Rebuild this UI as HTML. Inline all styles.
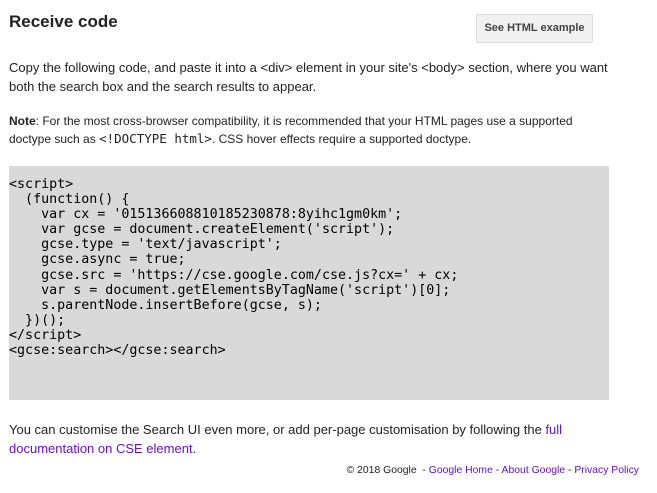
<!DOCTYPE html>
<html><head><style>
body{margin:0;background:#fff;font-family:"Liberation Sans",Arial,sans-serif;color:#222;width:657px;height:493px;position:relative;overflow:hidden}
h2{position:absolute;left:9px;top:12px;margin:0;font-size:17px;font-weight:bold;color:#222}
.btn{position:absolute;left:476px;top:14px;background:#f1f1f1;border:1px solid #dcdcdc;border-radius:2px;font-size:11px;font-weight:bold;color:#444;text-align:center;line-height:27px;box-sizing:border-box;width:117px;height:29px}
.p1{position:absolute;left:9px;top:58px;font-size:13px;line-height:19px;width:620px;margin:0}
.p2{position:absolute;left:9px;top:112px;font-size:12px;line-height:18px;width:600px;margin:0}
.p2 code{font-family:"DejaVu Sans Mono",monospace;font-size:12.5px}
pre{position:absolute;left:9px;top:166px;width:600px;height:234px;background:#d9d9d9;margin:0;padding:11px 0 0 0;box-sizing:border-box;font-family:"DejaVu Sans Mono",monospace;font-size:13.33px;line-height:15.1px;color:#000}
.p3{position:absolute;left:9px;top:420px;font-size:13px;line-height:19px;width:620px;margin:0}
a{color:#6611cc;text-decoration:none}
.ft{position:absolute;right:18px;top:465px;font-size:10.4px;color:#222}
</style></head><body>
<h2>Receive code</h2>
<div class="btn">See HTML example</div>
<p class="p1">Copy the following code, and paste it into a &lt;div&gt; element in your site's &lt;body&gt; section, where you want both the search box and the search results to appear.</p>
<p class="p2"><b>Note</b>: For the most cross-browser compatibility, it is recommended that your HTML pages use a supported doctype such as <code>&lt;!DOCTYPE html&gt;</code>. CSS hover effects require a supported doctype.</p>
<pre>&lt;script&gt;
  (function() {
    var cx = '015136608810185230878:8yihc1gm0km';
    var gcse = document.createElement('script');
    gcse.type = 'text/javascript';
    gcse.async = true;
    gcse.src = 'https://cse.google.com/cse.js?cx=' + cx;
    var s = document.getElementsByTagName('script')[0];
    s.parentNode.insertBefore(gcse, s);
  })();
&lt;/script&gt;
&lt;gcse:search&gt;&lt;/gcse:search&gt;</pre>
<p class="p3">You can customise the Search UI even more, or add per-page customisation by following the <a>full documentation on CSE element</a>.</p>
<div class="ft">© 2018 Google &nbsp;- <a>Google Home</a> - <a>About Google</a> - <a>Privacy Policy</a></div>
</body></html>
